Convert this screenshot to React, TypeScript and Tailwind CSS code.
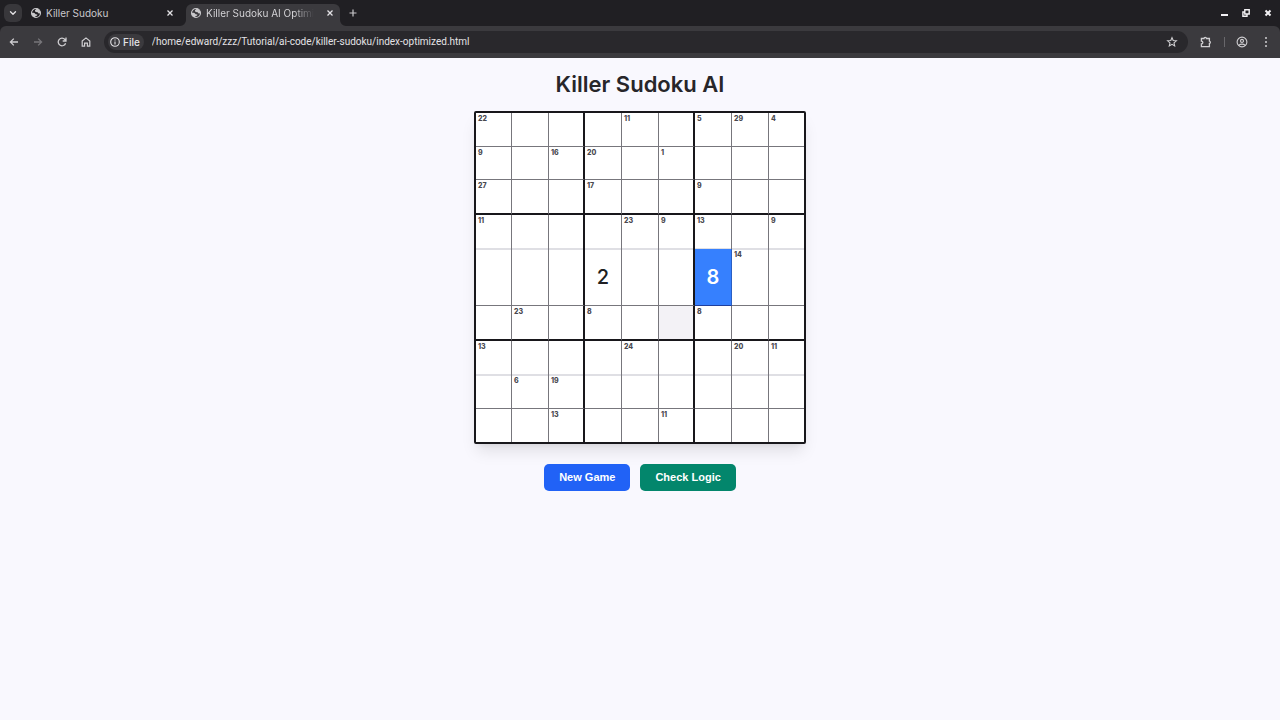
import React from "react";
import { ChevronDown } from "lucide-react";

type IconProps = { className?: string };

const stroke = {
  fill: "none",
  stroke: "currentColor",
  strokeWidth: 1.3,
  "aria-hidden": true,
} as const;

function Globe({ className }: IconProps) {
  return (
    <svg viewBox="0 0 12 12" className={className} aria-hidden="true">
      <circle cx="6" cy="6" r="4.5" fill="none" stroke="currentColor" strokeWidth="1.1" />
      <path d="M1.6 5.8C3.4 5.6 4.8 6 5.6 7.2L7.4 7.6 7 8.8 5.4 9 5.2 10.4C3 10 1.5 8.4 1.6 5.8Z" fill="currentColor" />
      <path d="M5 3.2 6.8 1.6C9 2 10.5 3.8 10.5 6.2L8.6 6.4 7.6 5.2 5.8 5 5 4.2Z" fill="currentColor" />
    </svg>
  );
}

function Cross({ className }: IconProps) {
  return (
    <svg viewBox="0 0 8 8" className={className} {...stroke}>
      <path d="M1.5 1.5 6.5 6.5M6.5 1.5 1.5 6.5" />
    </svg>
  );
}

function Plus() {
  return (
    <svg viewBox="0 0 10 10" className="size-2.5" {...stroke} strokeWidth={1.2}>
      <path d="M5 1.5V8.5M1.5 5H8.5" />
    </svg>
  );
}

function Arrow({ className }: IconProps) {
  return (
    <svg viewBox="0 0 12 12" className={className} {...stroke}>
      <path d="M10 6H2.6M5.8 2.6 2.4 6 5.8 9.4" />
    </svg>
  );
}

function Reload() {
  return (
    <svg viewBox="0 0 12 12" className="size-3" {...stroke}>
      <path d="M9.6 7.2A3.8 3.8 0 1 1 8.9 3.5L10 4.8M10 1.6V5H6.7" />
    </svg>
  );
}

function Home() {
  return (
    <svg viewBox="0 0 12 12" className="size-3" {...stroke} strokeWidth={1.2}>
      <path d="M2.2 5 6 1.9 9.8 5V10.2H7.4V7.2H4.6V10.2H2.2Z" />
    </svg>
  );
}

function Info() {
  return (
    <svg viewBox="0 0 12 12" className="size-3" {...stroke} strokeWidth={1.1}>
      <circle cx="6" cy="6" r="4.3" />
      <path d="M6 5.4V8.4M6 3.4V4.5" />
    </svg>
  );
}

function Star() {
  return (
    <svg viewBox="0 0 12 12" className="size-3" {...stroke} strokeWidth={1.1}>
      <path d="M6 1.6 7.2 4.5 10.4 4.8 8 6.9 8.7 10 6 8.4 3.3 10 4 6.9 1.6 4.8 4.8 4.5Z" />
    </svg>
  );
}

function Puzzle() {
  return (
    <svg viewBox="0 0 12 12" className="size-3" {...stroke} strokeWidth={1.3}>
      <path d="M1.4 2.5H4A1.2 1.2 0 0 1 6.4 2.5H9.4V5A1.3 1.3 0 0 1 9.4 7.5V10.6H1.4V8A1.4 1.4 0 0 0 1.4 5.1Z" />
    </svg>
  );
}

function Person() {
  return (
    <svg viewBox="0 0 12 12" className="size-3" {...stroke} strokeWidth={1.1}>
      <circle cx="6" cy="6" r="4.9" />
      <circle cx="6" cy="4.9" r="1.5" />
      <path d="M2.8 9.4C4.4 7.7 7.6 7.7 9.2 9.4" />
    </svg>
  );
}

function Dots() {
  return (
    <svg viewBox="0 0 12 12" className="size-3" fill="currentColor" aria-hidden="true">
      <circle cx="6" cy="2" r="1" />
      <circle cx="6" cy="6" r="1" />
      <circle cx="6" cy="10" r="1" />
    </svg>
  );
}

function TabCorner({ className }: IconProps) {
  return (
    <svg viewBox="0 0 6 6" className={className} fill="currentColor" aria-hidden="true">
      <path d="M6 0V6H0A6 6 0 0 0 6 0Z" />
    </svg>
  );
}

function TabBar() {
  return (
    <div className="flex h-[26px] items-stretch bg-[#201f23] text-[#c9c8cb]">
      <button aria-label="Search tabs" className="mt-1 ml-1 flex size-[18px] items-center justify-center rounded-md bg-[#38373b] text-[#e4e3e6]">
        <ChevronDown className="size-2.5" strokeWidth={3.2} />
      </button>
      <div className="ml-2 flex w-[150px] items-center gap-1 pr-1">
        <Globe className="size-3 shrink-0" />
        <span className="flex-1 text-[10px] leading-4">Killer Sudoku</span>
        <button aria-label="Close Killer Sudoku" className="p-0.5 text-[#e4e3e6]">
          <Cross className="size-2" />
        </button>
      </div>
      <TabCorner className="size-1.5 self-end text-[#3b3a3e]" />
      <div className="mt-1 flex w-[154px] items-center gap-1 rounded-t-md bg-[#3b3a3e] pr-1 pb-1 pl-1">
        <Globe className="size-3 shrink-0" />
        <span className="bg-linear-to-r from-[#dddcdf] from-82% to-[#3b3a3e] bg-clip-text text-[10px] leading-4 whitespace-nowrap text-transparent">
          Killer Sudoku AI Optimi
        </span>
        <button aria-label="Close Killer Sudoku AI" className="ml-auto p-0.5 text-[#e4e3e6]">
          <Cross className="size-2" />
        </button>
      </div>
      <TabCorner className="size-1.5 -scale-x-100 self-end text-[#3b3a3e]" />
      <button aria-label="New tab" className="ml-0.5 self-center">
        <Plus />
      </button>
      <div className="ml-auto flex items-center gap-3.5 pr-2 text-[#f2f1f4]">
        <button aria-label="Minimize">
          <svg viewBox="0 0 8 8" className="size-2" fill="currentColor" aria-hidden="true">
            <path d="M1 5H8V7H1Z" />
          </svg>
        </button>
        <button aria-label="Restore">
          <svg viewBox="0 0 8 8" className="size-2" {...stroke} strokeWidth={1.4}>
            <path d="M2.8 .8H7.2V5H2.8ZM2.8 3H.9V7.2H5V5" />
          </svg>
        </button>
        <button aria-label="Close window">
          <Cross className="size-2 stroke-2" />
        </button>
      </div>
    </div>
  );
}

function Toolbar() {
  return (
    <div className="bg-[#201f23]">
      <div className="flex h-8 items-center rounded-t-md bg-[#3b3a3e] px-2 text-[#d0cfd2]">
        <div className="flex gap-3">
          <button aria-label="Back"><Arrow className="size-3" /></button>
          <button aria-label="Forward" disabled className="text-[#77767a]"><Arrow className="size-3 rotate-180" /></button>
          <button aria-label="Reload"><Reload /></button>
          <button aria-label="Home"><Home /></button>
        </div>
        <div className="ml-3 flex h-[22px] min-w-0 flex-1 items-center rounded-full bg-[#29282c] pr-2.5 pl-1">
          <button className="flex h-4 items-center gap-0.5 rounded-lg bg-[#3b3a3e] pr-1 pl-px text-[10px] leading-4 font-medium text-[#e4e3e6]">
            <Info />
            File
          </button>
          <input
            aria-label="Address"
            defaultValue="/home/edward/zzz/Tutorial/ai-code/killer-sudoku/index-optimized.html"
            className="ml-2 min-w-0 flex-1 bg-transparent font-['Roboto',sans-serif] text-[10px] leading-4 text-[#e4e3e6] outline-none"
          />
          <button aria-label="Bookmark this page"><Star /></button>
        </div>
        <div className="ml-3 flex items-center gap-3">
          <button aria-label="Extensions"><Puzzle /></button>
          <div className="-mr-px h-2.5 w-px bg-[#68676b]" />
          <button aria-label="Profile"><Person /></button>
          <button aria-label="Menu"><Dots /></button>
        </div>
      </div>
    </div>
  );
}

type Row = { height: string; line: string; sums: (number | null)[] };

const n = null;
const thin = "border-b border-b-[#77767c]";
const thick = "border-b-2 border-b-[#18171b]";
const paleBelow = "shadow-[inset_0_-1px_0_#dfdfe4]";
const paleAbove = "border-b border-b-[#77767c] shadow-[inset_0_1px_0_#dfdfe4]";

const rows: Row[] = [
  { height: "h-[34px]", line: thin, sums: [22, n, n, n, 11, n, 5, 29, 4] },
  { height: "h-[33px]", line: thin, sums: [9, n, 16, 20, n, 1, n, n, n] },
  { height: "h-[35px]", line: thick, sums: [27, n, n, 17, n, n, 9, n, n] },
  { height: "h-[34px]", line: paleBelow, sums: [11, n, n, n, 23, 9, 13, n, 9] },
  { height: "h-[57px]", line: paleAbove, sums: [n, n, n, n, n, n, n, 14, n] },
  { height: "h-[35px]", line: thick, sums: [n, 23, n, 8, n, n, 8, n, n] },
  { height: "h-[34px]", line: paleBelow, sums: [13, n, n, n, 24, n, n, 20, 11] },
  { height: "h-[34px]", line: paleAbove, sums: [n, 6, 19, n, n, n, n, n, n] },
  { height: "h-[33px]", line: "", sums: [n, n, 13, n, n, 11, n, n, n] },
];

const values: Record<string, number> = { "4-3": 2, "4-6": 8 };

const selectedCell =
  "border-r border-b border-r-[#2a5fc4] border-b-[#1f3f9c] bg-[#3680fe] font-semibold text-white";

function columnLine(c: number) {
  if (c === 8) return "";
  return c % 3 === 2 ? "border-r-2 border-r-[#18171b]" : "border-r border-r-[#77767c]";
}

function cellStyle(r: number, c: number, line: string) {
  if (r === 4 && c === 6) return selectedCell;
  const tone = r === 5 && c === 5 ? "bg-[#f3f2f6]" : "bg-white";
  return `${tone} ${line} ${columnLine(c)} font-medium text-[#201f23]`;
}

function Board() {
  return (
    <div className="w-[332px] rounded-xs border-2 border-[#18171b] bg-white shadow-lg">
      {rows.map((row, r) => (
        <div key={r} className={`grid grid-cols-[36fr_37fr_36fr_37fr_37fr_36fr_37fr_37fr_35fr] ${row.height}`}>
          {row.sums.map((sum, c) => (
            <button
              key={c}
              aria-label={`Row ${r + 1}, column ${c + 1}`}
              className={`relative flex items-center justify-center text-xl ${cellStyle(r, c, row.line)}`}
            >
              {sum !== null && (
                <span className="absolute top-0.5 left-0.5 text-[7px] leading-2 font-extrabold text-[#4a494f]">{sum}</span>
              )}
              {values[`${r}-${c}`]}
            </button>
          ))}
        </div>
      ))}
    </div>
  );
}

export default function App() {
  return (
    <div className="min-h-screen bg-[#f9f8fe] font-['Inter',sans-serif]">
      <header>
        <TabBar />
        <Toolbar />
      </header>
      <main className="flex flex-col items-center pt-3">
        <h1 className="text-[22px] leading-7 font-semibold text-[#27262a]">Killer Sudoku AI</h1>
        <div className="mt-[13px]">
          <Board />
        </div>
        <div className="mt-5 flex gap-2.5 font-['Liberation_Sans',sans-serif] text-[11px] leading-[15px] font-bold text-white">
          <button className="rounded-[5px] bg-[#2162f6] px-[15px] py-1.5">New Game</button>
          <button className="rounded-[5px] bg-[#03866c] px-[15px] py-1.5">Check Logic</button>
        </div>
      </main>
    </div>
  );
}
